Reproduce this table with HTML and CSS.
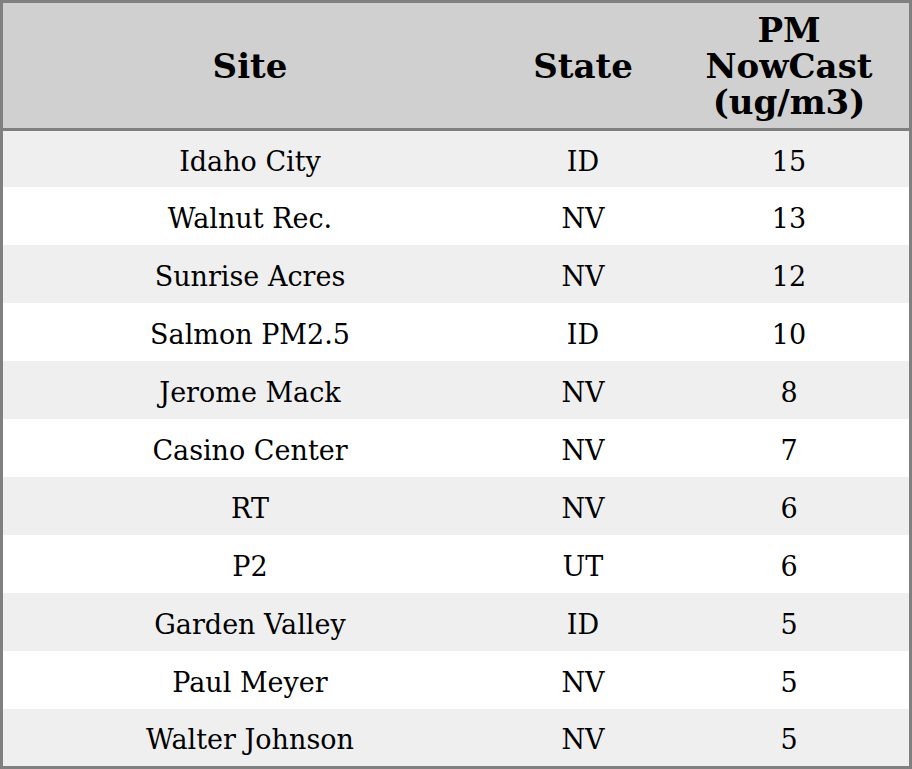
FILE: index.html
```html
<!DOCTYPE html>
<html>
<head>
<meta charset="utf-8">
<link rel="stylesheet" href="styles.css">
</head>
<body>
<table class="aq-table">
  <thead>
    <tr>
      <th class="col-site">Site</th>
      <th class="col-state">State</th>
      <th class="col-pm">PM<br>NowCast<br>(ug/m3)</th>
    </tr>
  </thead>
  <tbody>
    <tr><td>Idaho City</td><td>ID</td><td>15</td></tr>
    <tr><td>Walnut Rec.</td><td>NV</td><td>13</td></tr>
    <tr><td>Sunrise Acres</td><td>NV</td><td>12</td></tr>
    <tr><td>Salmon PM2.5</td><td>ID</td><td>10</td></tr>
    <tr><td>Jerome Mack</td><td>NV</td><td>8</td></tr>
    <tr><td>Casino Center</td><td>NV</td><td>7</td></tr>
    <tr><td>RT</td><td>NV</td><td>6</td></tr>
    <tr><td>P2</td><td>UT</td><td>6</td></tr>
    <tr><td>Garden Valley</td><td>ID</td><td>5</td></tr>
    <tr><td>Paul Meyer</td><td>NV</td><td>5</td></tr>
    <tr><td>Walter Johnson</td><td>NV</td><td>5</td></tr>
  </tbody>
</table>
</body>
</html>
```
FILE: styles.css
```css
html, body {
  margin: 0;
  padding: 0;
  background: #ffffff;
}
.aq-table {
  width: 912px;
  border-collapse: separate;
  border-spacing: 0;
  border: 3px solid #808080;
  box-sizing: border-box;
  font-family: "DejaVu Serif", serif;
  color: #000;
}
.aq-table th {
  background: #d0d0d0;
  font-weight: bold;
  font-size: 34px;
  line-height: 36px;
  height: 125px;
  padding: 0;
  border-bottom: 3px solid #808080;
  text-align: center;
  vertical-align: middle;
}
.col-site { width: 494px; }
.col-state { width: 172px; }
.col-pm { width: 240px; }
.aq-table td {
  font-size: 27px;
  height: 58px;
  padding: 4px 0 0;
  box-sizing: border-box;
  text-align: center;
  vertical-align: middle;
}
.aq-table tbody tr:nth-child(odd) td {
  background: #efefef;
}
.aq-table tbody tr:first-child td { height: 56px; }
.aq-table tbody tr:last-child td { height: 57px; }
```
